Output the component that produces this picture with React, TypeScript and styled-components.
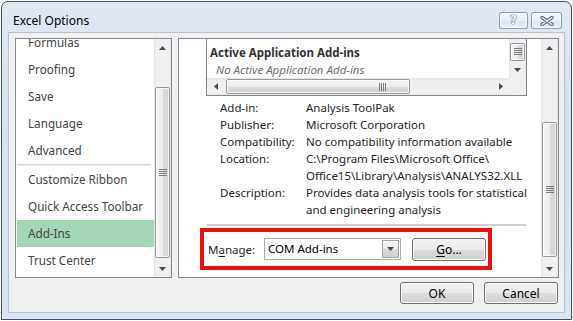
import React from "react";
import styled, { createGlobalStyle } from "styled-components";

const GlobalStyle = createGlobalStyle`
  html, body { margin: 0; padding: 0; background: #ffffff; }
  body { font-family: "Noto Sans", "Open Sans", sans-serif; font-size: 11.5px; color: #1e1e1e; }
  * { box-sizing: border-box; }
`;

const Page = styled.div`
  width: 573px;
  height: 321px;
  padding: 1px 0 0 1px;
  overflow: hidden;
  background: #ffffff;
`;

const Window = styled.div`
  width: 571px;
  height: 319px;
  border: 1px solid #4a4e55;
  border-radius: 7px 7px 0 0;
  background: linear-gradient(180deg, #dfe8f3 0%, #d6e2f0 40%, #d9e5f2 100%);
  display: flex;
  flex-direction: column;
  padding: 0 6px 6px 6px;
`;

const TitleBar = styled.div`
  height: 30px;
  display: flex;
  align-items: flex-start;
  padding: 10px 3px 0 5px;
`;

const TitleText = styled.div`
  flex: 1;
  line-height: 17px;
  font-size: 12px;
  color: #000;
`;

const TitleButtons = styled.div`
  display: flex;
  gap: 3px;
`;

const TitleButton = styled.div<{ $w: number }>`
  width: ${(p) => p.$w}px;
  height: 17px;
  border: 1px solid rgba(70, 90, 120, 0.55);
  border-radius: 3px;
  background: linear-gradient(180deg, rgba(255,255,255,0.75) 0%, rgba(255,255,255,0.35) 50%, rgba(215,226,240,0.5) 51%, rgba(235,241,248,0.7) 100%);
  box-shadow: inset 0 0 0 1px rgba(255,255,255,0.55);
  display: flex;
  align-items: center;
  justify-content: center;
`;

const HelpGlyph = styled.span`
  font-family: "DejaVu Sans", sans-serif;
  font-weight: bold;
  font-size: 12px;
  line-height: 13px;
  color: #f6f8fb;
  text-shadow: 0 0 1px #55606e, 0 0 1px #55606e, 0 0 1px #55606e;
`;

const Client = styled.div`
  flex: 1;
  border: 1px solid #b3c2d4;
  background: #f0f0f0;
  display: grid;
  grid-template-columns: 157px 381px;
  grid-template-rows: 240px 22px;
  column-gap: 6px;
  row-gap: 4px;
  padding: 5px 0 0 6px;
`;

const Panel = styled.div`
  border: 1px solid #828790;
  background: #ffffff;
  display: flex;
  overflow: hidden;
`;

const ListViewport = styled.div`
  flex: 1;
  overflow: hidden;
  padding-left: 1px;
`;

const ListInner = styled.div<{ $scroll: number }>`
  margin-top: ${(p) => -p.$scroll}px;
`;

const NavItem = styled.div<{ $selected?: boolean }>`
  height: 27px;
  line-height: 27px;
  padding-left: 11px;
  color: #444444;
  font-size: 11.7px;
  white-space: nowrap;
  background: ${(p) => (p.$selected ? "#a3d6b6" : "transparent")};
`;

const NavSeparator = styled.div`
  height: 2px;
  margin-right: 3px;
  border-top: 1px solid #d6d6d6;
  border-bottom: 1px solid #eeeeee;
`;

const VScroll = styled.div`
  width: 17px;
  flex: none;
  display: flex;
  flex-direction: column;
  background: linear-gradient(90deg, #e3e3e3 0%, #efefef 15%, #f1f1f1 85%, #e6e6e6 100%);
`;

const HScroll = styled.div`
  height: 17px;
  display: flex;
  background: linear-gradient(180deg, #e3e3e3 0%, #efefef 15%, #f1f1f1 85%, #e6e6e6 100%);
`;

const ArrowCell = styled.div`
  width: 17px;
  height: 17px;
  flex: none;
  display: flex;
  align-items: center;
  justify-content: center;
`;

const VThumb = styled.div<{ $offset: number; $size: number }>`
  margin: ${(p) => p.$offset}px 1px 0 1px;
  height: ${(p) => p.$size}px;
  flex: none;
  border: 1px solid #9a9a9a;
  border-radius: 2px;
  background: linear-gradient(90deg, #f5f5f5 0%, #ececec 50%, #dcdcdc 51%, #d2d2d2 100%);
  box-shadow: inset 0 0 0 1px rgba(255,255,255,0.7);
  display: flex;
  align-items: center;
  justify-content: center;
`;

const HThumb = styled.div<{ $offset: number; $size: number; $grip: number }>`
  margin: 1px 0 1px ${(p) => p.$offset}px;
  width: ${(p) => p.$size}px;
  flex: none;
  border: 1px solid #9a9a9a;
  border-radius: 2px;
  background: linear-gradient(180deg, #f5f5f5 0%, #ececec 50%, #dcdcdc 51%, #d2d2d2 100%);
  box-shadow: inset 0 0 0 1px rgba(255,255,255,0.7);
  display: flex;
  align-items: center;
  justify-content: flex-end;
  padding-right: ${(p) => p.$grip}px;
`;

const Spacer = styled.div`
  flex: 1;
`;

const ContentViewport = styled.div`
  flex: 1;
  overflow: hidden;
`;

const ContentInner = styled.div<{ $scroll: number }>`
  margin-top: ${(p) => -p.$scroll}px;
  padding-left: 27px;
  display: flex;
  flex-direction: column;
  align-items: flex-start;
`;

const AddinBox = styled.div`
  width: 321px;
  border: 1px solid #828790;
  display: grid;
  grid-template-columns: 1fr 17px;
  grid-template-rows: 44px 17px;
`;

const BoxContent = styled.div`
  padding-top: 10px;
  overflow: hidden;
`;

const GroupHeader = styled.div`
  line-height: 17px;
  font-weight: bold;
  color: #333333;
  padding-left: 3px;
  white-space: nowrap;
`;

const EmptyRow = styled.div`
  line-height: 17px;
  font-style: italic;
  color: #6e6e6e;
  padding-left: 9px;
  white-space: nowrap;
`;

const BoxVScroll = styled(VScroll)`
  justify-content: flex-end;
`;

const Corner = styled.div`
  background: #f0f0f0;
`;

const Details = styled.div`
  margin-top: 3px;
  padding-left: 14px;
  display: grid;
  grid-template-columns: 86px 230px;
  line-height: 17px;
  color: #1e1e1e;
`;

const DetailLabel = styled.div`
  white-space: nowrap;
`;

const DetailValue = styled.div`
  white-space: nowrap;
`;

const Rule = styled.div`
  margin-top: 6px;
  margin-left: 1px;
  width: 319px;
  height: 2px;
  background: #cfcfcf;
`;

const Highlight = styled.div`
  margin-top: 2px;
  margin-left: -6px;
  width: 292px;
  height: 42px;
  border: 4px solid #f00f0f;
  display: flex;
  align-items: center;
  padding-left: 4px;
`;

const ManageLabel = styled.label`
  width: 56px;
  flex: none;
  color: #1e1e1e;
  white-space: nowrap;
`;

const Underlined = styled.span`
  text-decoration: underline;
  text-underline-offset: 2px;
`;

const Select = styled.div`
  width: 137px;
  height: 22px;
  flex: none;
  border: 1px solid #abadb3;
  background: #ffffff;
  display: flex;
`;

const SelectText = styled.div`
  flex: 1;
  line-height: 20px;
  padding-left: 3px;
  color: #000;
  white-space: nowrap;
`;

const DropButton = styled.div`
  width: 17px;
  margin: 1px;
  border: 1px solid #a4a4a4;
  background: linear-gradient(180deg, #f6f6f6 0%, #e9e9e9 50%, #dadada 51%, #cfcfcf 100%);
  display: flex;
  align-items: center;
  justify-content: center;
`;

const PushButton = styled.div<{ $ml?: number }>`
  width: 74px;
  height: ${(p) => (p.$ml ? 23 : 22)}px;
  margin-left: ${(p) => p.$ml ?? 0}px;
  flex: none;
  border: 1px solid #707070;
  border-radius: 3px;
  background: linear-gradient(180deg, #f2f2f2 0%, #ebebeb 50%, #dddddd 51%, #cfcfcf 100%);
  box-shadow: inset 0 0 0 1px #fbfbfb;
  display: flex;
  align-items: center;
  justify-content: center;
  color: #000;
  font-size: 12px;
`;

const Footer = styled.div`
  grid-column: 1 / -1;
  display: flex;
  justify-content: flex-end;
  gap: 10px;
  padding-right: 1px;
`;

const Up = () => (
  <svg width="7" height="4" viewBox="0 0 7 4"><polygon points="0,4 7,4 3.5,0" fill="#4a4a4a" /></svg>
);
const Down = () => (
  <svg width="7" height="4" viewBox="0 0 7 4"><polygon points="0,0 7,0 3.5,4" fill="#4a4a4a" /></svg>
);
const Left = () => (
  <svg width="4" height="7" viewBox="0 0 4 7"><polygon points="4,0 4,7 0,3.5" fill="#4a4a4a" /></svg>
);
const Right = () => (
  <svg width="4" height="7" viewBox="0 0 4 7"><polygon points="0,0 0,7 4,3.5" fill="#4a4a4a" /></svg>
);
const HGrip = () => (
  <svg width="8" height="8" viewBox="0 0 8 8">
    {[0, 2, 4, 6].map((y) => (
      <rect key={y} x="0" y={y} width="8" height="1" fill="#7a7a7a" />
    ))}
  </svg>
);
const VGrip = () => (
  <svg width="8" height="8" viewBox="0 0 8 8">
    {[0, 2, 4, 6].map((x) => (
      <rect key={x} x={x} y="0" width="1" height="8" fill="#7a7a7a" />
    ))}
  </svg>
);
const CloseGlyph = () => (
  <svg width="14" height="10" viewBox="0 0 14 10">
    <path d="M2 1.5 L12 8.5 M12 1.5 L2 8.5" stroke="#5b6776" strokeWidth="3.4" strokeLinecap="round" />
    <path d="M2 1.5 L12 8.5 M12 1.5 L2 8.5" stroke="#f5f7fa" strokeWidth="1.4" strokeLinecap="round" />
  </svg>
);

const navTop = ["Formulas", "Proofing", "Save", "Language", "Advanced"];
const navBottom = ["Customize Ribbon", "Quick Access Toolbar", "Add-Ins", "Trust Center"];

const details: { label: string; value: string[] }[] = [
  { label: "Add-in:", value: ["Analysis ToolPak"] },
  { label: "Publisher:", value: ["Microsoft Corporation"] },
  { label: "Compatibility:", value: ["No compatibility information available"] },
  { label: "Location:", value: ["C:\\Program Files\\Microsoft Office\\", "Office15\\Library\\Analysis\\ANALYS32.XLL"] },
  { label: "Description:", value: ["Provides data analysis tools for statistical", "and engineering analysis"] },
];

export default function App() {
  return (
    <>
      <GlobalStyle />
      <Page>
        <Window>
          <TitleBar>
            <TitleText>Excel Options</TitleText>
            <TitleButtons>
              <TitleButton $w={29}>
                <HelpGlyph>?</HelpGlyph>
              </TitleButton>
              <TitleButton $w={31}>
                <CloseGlyph />
              </TitleButton>
            </TitleButtons>
          </TitleBar>
          <Client>
            <Panel>
              <ListViewport>
                <ListInner $scroll={10}>
                  {navTop.map((n) => (
                    <NavItem key={n}>{n}</NavItem>
                  ))}
                  <NavSeparator />
                  {navBottom.map((n) => (
                    <NavItem key={n} $selected={n === "Add-Ins"}>
                      {n}
                    </NavItem>
                  ))}
                </ListInner>
              </ListViewport>
              <VScroll>
                <ArrowCell><Up /></ArrowCell>
                <VThumb $offset={31} $size={171}><HGrip /></VThumb>
                <Spacer />
                <ArrowCell><Down /></ArrowCell>
              </VScroll>
            </Panel>
            <Panel>
              <ContentViewport>
                <ContentInner $scroll={6}>
                  <AddinBox>
                    <BoxContent>
                      <GroupHeader>Active Application Add-ins</GroupHeader>
                      <EmptyRow>No Active Application Add-ins</EmptyRow>
                    </BoxContent>
                    <BoxVScroll>
                      <VThumb $offset={0} $size={18}><HGrip /></VThumb>
                      <ArrowCell><Down /></ArrowCell>
                    </BoxVScroll>
                    <HScroll>
                      <ArrowCell><Left /></ArrowCell>
                      <HThumb $offset={2} $size={184} $grip={22}><VGrip /></HThumb>
                      <Spacer />
                      <ArrowCell><Right /></ArrowCell>
                    </HScroll>
                    <Corner />
                  </AddinBox>
                  <Details>
                    {details.map((d) => (
                      <React.Fragment key={d.label}>
                        <DetailLabel>{d.label}</DetailLabel>
                        <DetailValue>
                          {d.value.map((v) => (
                            <div key={v}>{v}</div>
                          ))}
                        </DetailValue>
                      </React.Fragment>
                    ))}
                  </Details>
                  <Rule />
                  <Highlight>
                    <ManageLabel>
                      M<Underlined>a</Underlined>nage:
                    </ManageLabel>
                    <Select>
                      <SelectText>COM Add-ins</SelectText>
                      <DropButton><Down /></DropButton>
                    </Select>
                    <PushButton $ml={11}>
                      <Underlined>G</Underlined>o...
                    </PushButton>
                  </Highlight>
                </ContentInner>
              </ContentViewport>
              <VScroll>
                <ArrowCell><Up /></ArrowCell>
                <VThumb $offset={66} $size={135}><HGrip /></VThumb>
                <Spacer />
                <ArrowCell><Down /></ArrowCell>
              </VScroll>
            </Panel>
            <Footer>
              <PushButton>OK</PushButton>
              <PushButton>Cancel</PushButton>
            </Footer>
          </Client>
        </Window>
      </Page>
    </>
  );
}
